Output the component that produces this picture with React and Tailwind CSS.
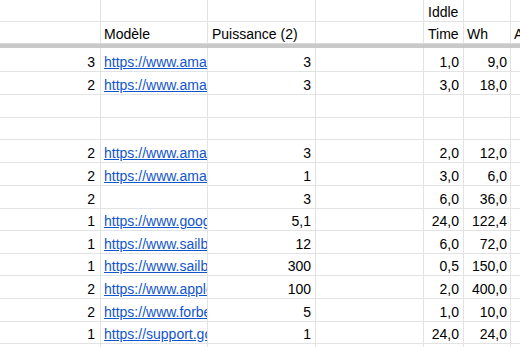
import React from 'react';

const cols = [
  { w: 'w-[101px]', align: 'justify-end pr-[5px]' },
  { w: 'w-[107px]', align: 'justify-start pl-[3px]' },
  { w: 'w-[108px]', align: 'justify-end pr-[4px]' },
  { w: 'w-[108px]', align: 'justify-end pr-[4px]' },
  { w: 'w-[40px]', align: 'justify-end pr-[4px]' },
  { w: 'w-[47px]', align: 'justify-end pr-[3px]' },
  { w: 'flex-1', align: 'justify-start pl-[3px]' },
];

const rows = [
  { h: 'h-[24px]', v: ['3', 'https://www.amazon.fr/dp/B07', '3', '', '1,0', '9,0'] },
  { h: 'h-[23px]', v: ['2', 'https://www.amazon.fr/dp/B08', '3', '', '3,0', '18,0'] },
  { h: 'h-[23px]', v: [] },
  { h: 'h-[22px]', v: [] },
  { h: 'h-[23px]', v: ['2', 'https://www.amazon.fr/dp/B09', '3', '', '2,0', '12,0'] },
  { h: 'h-[23px]', v: ['2', 'https://www.amazon.fr/dp/B01', '1', '', '3,0', '6,0'] },
  { h: 'h-[23px]', v: ['2', '', '3', '', '6,0', '36,0'] },
  { h: 'h-[22px]', v: ['1', 'https://www.google.com/nest', '5,1', '', '24,0', '122,4'] },
  { h: 'h-[23px]', v: ['1', 'https://www.sailboat.com/', '12', '', '6,0', '72,0'] },
  { h: 'h-[22px]', v: ['1', 'https://www.sailboat.com/', '300', '', '0,5', '150,0'] },
  { h: 'h-[23px]', v: ['2', 'https://www.apple.com/fr/', '100', '', '2,0', '400,0'] },
  { h: 'h-[23px]', v: ['2', 'https://www.forbes.com/', '5', '', '1,0', '10,0'] },
  { h: 'h-[22px]', v: ['1', 'https://support.google.com/', '1', '', '24,0', '24,0'] },
  { h: 'h-[23px]', v: [] },
];

const Cell = ({ i, children, last, align }) => (
  <div
    className={`${cols[i].w} ${align || cols[i].align} flex items-end pb-[1px] overflow-hidden whitespace-nowrap ${
      last ? '' : 'border-r'
    } border-[#e2e3e3]`}
  >
    {children}
  </div>
);

const Row = ({ h, cells, border = true, aligns = [] }) => (
  <div className={`${h} flex ${border ? 'border-b border-[#e2e3e3]' : ''}`}>
    {cols.map((c, i) => (
      <Cell key={i} i={i} last={i === cols.length - 1} align={aligns[i]}>
        {cells[i]}
      </Cell>
    ))}
  </div>
);

export default function App() {
  return (
    <div className="w-[520px] h-[347px] overflow-hidden bg-white text-[14px] leading-[16px] text-[#000] font-['Liberation_Sans',Arial,sans-serif]">
      <Row
        h="h-[22px]"
        cells={['', '', '', '', 'Iddle', '', '']}
        aligns={[null, null, null, null, 'justify-start pl-[4px]']}
      />
      <div className="h-[21px] flex">
        {['', 'Modèle', 'Puissance (2)', '', 'Time', 'Wh', 'A'].map((t, i) => (
          <div
            key={i}
            className={`${cols[i].w} flex items-end pb-[1px] overflow-hidden whitespace-nowrap ${
              i === 2 || i === 4 ? 'pl-[4px]' : 'pl-[3px]'
            } ${i === cols.length - 1 ? '' : 'border-r'} border-[#e2e3e3]`}
          >
            {t}
          </div>
        ))}
      </div>
      <div className="h-[5px] bg-[#c9c9c9] border-t border-[#d9d9d9]" />
      {rows.map((r, ri) => (
        <Row
          key={ri}
          h={r.h}
          cells={r.v.map((v, i) =>
            i === 1 && v ? (
              <span className="text-[#1155cc] underline">{v}</span>
            ) : (
              v
            )
          )}
        />
      ))}
    </div>
  );
}
